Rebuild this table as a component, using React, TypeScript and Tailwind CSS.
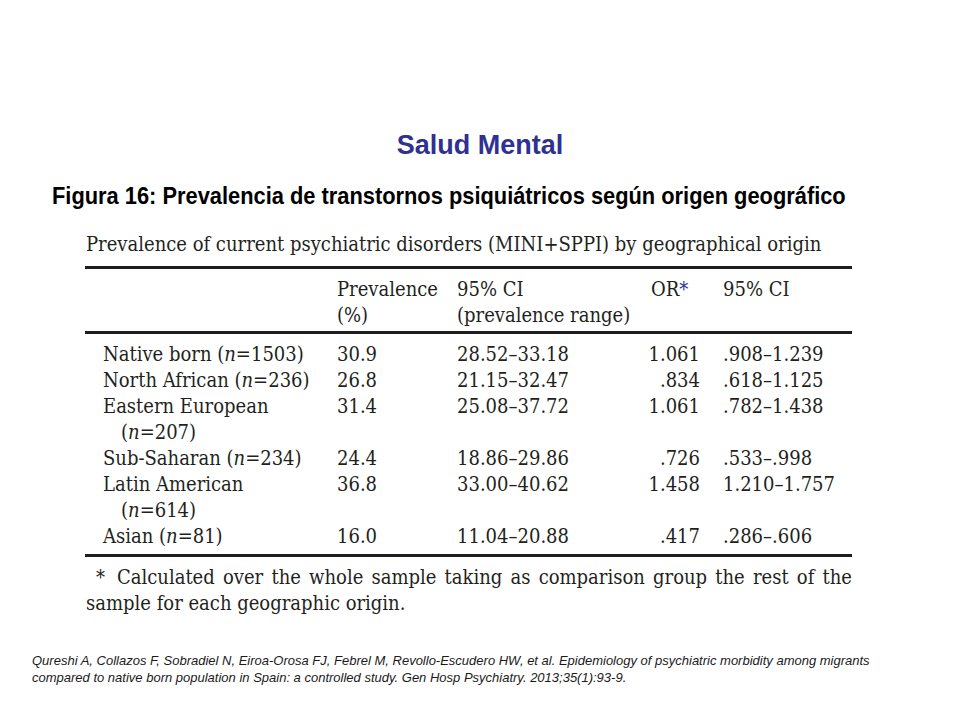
const rows = [
  { label: "Native born", n: "1503", prev: "30.9", ci: "28.52–33.18", or: "1.061", ci2: ".908–1.239", wrap: false },
  { label: "North African", n: "236", prev: "26.8", ci: "21.15–32.47", or: ".834", ci2: ".618–1.125", wrap: false },
  { label: "Eastern European", n: "207", prev: "31.4", ci: "25.08–37.72", or: "1.061", ci2: ".782–1.438", wrap: true },
  { label: "Sub-Saharan", n: "234", prev: "24.4", ci: "18.86–29.86", or: ".726", ci2: ".533–.998", wrap: false },
  { label: "Latin American", n: "614", prev: "36.8", ci: "33.00–40.62", or: "1.458", ci2: "1.210–1.757", wrap: true },
  { label: "Asian", n: "81", prev: "16.0", ci: "11.04–20.88", or: ".417", ci2: ".286–.606", wrap: false },
];

const tableFont = "font-['DejaVu_Serif_Condensed','DejaVu_Serif',serif]";

function N({ n }: { n: string }) {
  return (
    <>
      (<span className="italic">n</span>={n})
    </>
  );
}

export default function App() {
  return (
    <div className="w-[960px] h-[720px] bg-white relative font-['Liberation_Sans',Arial,sans-serif]">
      <div className="pt-[127px] text-center text-[27px] leading-[36px] font-bold text-[#2e3192]">
        Salud Mental
      </div>
      <div className="mt-[19px] pl-[52px] text-[24px] leading-[28px] font-bold text-black whitespace-nowrap">
        <div className="origin-left scale-x-[0.91]">
          Figura 16: Prevalencia de transtornos psiquiátricos según origen geográfico
        </div>
      </div>

      <div className={`ml-[85px] w-[767px] mt-[21px] text-[20px] text-[#231f20] ${tableFont}`}>
        <div className="pl-px leading-[26px]">
          Prevalence of current psychiatric disorders (MINI+SPPI) by geographical origin
        </div>
        <div className="mt-[9px] h-[3px] bg-[#1e1e1e]" />
        <div className="grid grid-cols-[252px_120px_160px_83px_1fr] leading-[26px] pt-[7px] pb-[3px] whitespace-nowrap">
          <div className="pl-[18px]" />
          <div>
            Prevalence
            <br />
            (%)
          </div>
          <div>
            95% CI
            <br />
            (prevalence range)
          </div>
          <div className="pl-[34px]">
            OR<span className="text-[#2e3192]">*</span>
          </div>
          <div className="pl-[23px]">95% CI</div>
        </div>
        <div className="h-[3px] bg-[#1e1e1e]" />
        <div className="grid grid-cols-[252px_120px_160px_83px_1fr] leading-[26px] pt-[7px] pb-[5px]">
          {rows.map((r) => (
            <div key={r.label} className="contents">
              <div className="pl-[18px]">
                {r.wrap ? (
                  <>
                    {r.label}
                    <div className="pl-[18px]">
                      <N n={r.n} />
                    </div>
                  </>
                ) : (
                  <>
                    {r.label} <N n={r.n} />
                  </>
                )}
              </div>
              <div>{r.prev}</div>
              <div>{r.ci}</div>
              <div className="text-right">{r.or}</div>
              <div className="pl-[23px]">{r.ci2}</div>
            </div>
          ))}
        </div>
        <div className="h-[3px] bg-[#1e1e1e]" />
        <div className="mt-[7px] pl-[11px] leading-[26px] text-justify">
          <span className="mr-[12px]">*</span>Calculated over the whole sample taking as comparison group the rest of the{" "}
          <span className="-ml-[10px]">sample for each geographic origin.</span>
        </div>
      </div>

      <div className="mt-[36px] pl-[32px] text-[13px] leading-[17px] italic text-[#1a1a1a] whitespace-nowrap">
        Qureshi A, Collazos F, Sobradiel N, Eiroa-Orosa FJ, Febrel M, Revollo-Escudero HW, et al. Epidemiology of psychiatric morbidity among migrants
        <br />
        compared to native born population in Spain: a controlled study. Gen Hosp Psychiatry. 2013;35(1):93-9.
      </div>
    </div>
  );
}
